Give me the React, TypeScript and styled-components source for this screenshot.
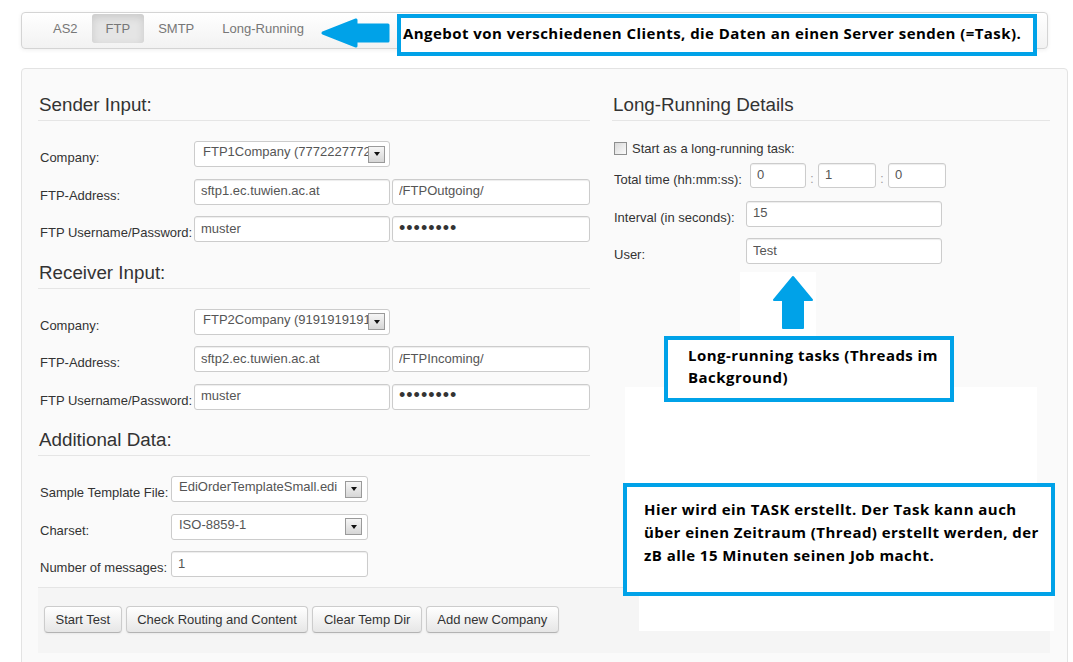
import React from 'react';
import styled, { createGlobalStyle } from 'styled-components';

const Global = createGlobalStyle`
  html, body { margin: 0; padding: 0; background: #fff; overflow: hidden; }
  body { font-family: "Liberation Sans", Arial, sans-serif; font-size: 13px; color: #333; }
  * { box-sizing: border-box; }
`;

const Page = styled.div`
  position: relative;
  width: 1073px;
  height: 662px;
  padding: 12px 0 0 21px;
`;

const NavBar = styled.div`
  width: 1027px;
  height: 37px;
  background: linear-gradient(#ffffff, #f2f2f2);
  border: 1px solid #d4d4d4;
  border-radius: 4px;
  box-shadow: 0 1px 4px rgba(0, 0, 0, 0.065);
  display: flex;
  align-items: flex-start;
  padding: 1px 0 0 17px;
`;

const Tab = styled.div<{ $active?: boolean }>`
  height: 29px;
  line-height: 29px;
  padding: 0 14px;
  color: #777;
  font-size: 13px;
  border-radius: 3px;
  background: ${(p) => (p.$active ? '#e5e5e5' : 'transparent')};
  box-shadow: ${(p) => (p.$active ? 'inset 0 3px 8px rgba(0,0,0,0.125)' : 'none')};
`;

const Panel = styled.div`
  margin-top: 19px;
  width: 1047px;
  height: 620px;
  background: #fafafa;
  border: 1px solid #e3e3e3;
  border-radius: 4px;
  padding: 0 17px 0 16px;
`;

const Columns = styled.div`
  display: grid;
  grid-template-columns: 552px 438px;
  column-gap: 22px;
`;

const Column = styled.div`
  padding-top: 21px;
  display: flex;
  flex-direction: column;
`;

const Legend = styled.div`
  height: 31px;
  line-height: 30px;
  font-size: 18.8px;
  color: #333;
  border-bottom: 1px solid #e5e5e5;
  margin-bottom: 20px;
  padding-left: 1px;
`;

const Fields = styled.div`
  display: flex;
  flex-direction: column;
  gap: 11.5px;
  margin-bottom: 15.5px;
  &:last-child {
    margin-bottom: 0;
  }
`;

const Row = styled.div<{ $label: number }>`
  display: grid;
  grid-template-columns: ${(p) => p.$label}px auto;
  align-items: start;
`;

const Label = styled.label`
  line-height: 18px;
  padding-top: 8px;
  padding-left: 2px;
  white-space: nowrap;
  color: #333;
`;

const Controls = styled.div`
  display: flex;
  gap: 2px;
  align-items: center;
`;

const Input = styled.input<{ $w: number; $h?: number; $dots?: boolean }>`
  width: ${(p) => p.$w}px;
  height: ${(p) => p.$h ?? 26}px;
  padding: 0 6px 2px;
  border: 1px solid #ccc;
  border-radius: 3px;
  background: #fff;
  color: ${(p) => (p.$dots ? '#333' : '#555')};
  font-family: "Liberation Sans", Arial, sans-serif;
  font-size: ${(p) => (p.$dots ? '18px' : '13px')};
  letter-spacing: ${(p) => (p.$dots ? '1px' : '0')};
  box-shadow: inset 0 1px 1px rgba(0, 0, 0, 0.075);
  outline: none;
`;

const Select = styled.div<{ $w: number; $pad: number; $btnGap: number }>`
  width: ${(p) => p.$w}px;
  height: 26px;
  border: 1px solid #ccc;
  border-radius: 3px;
  background: #fff;
  display: flex;
  align-items: center;
  padding: 0 ${(p) => p.$btnGap}px 0 ${(p) => p.$pad}px;
  color: #555;
`;

const SelectText = styled.span`
  flex: 1;
  min-width: 0;
  overflow: hidden;
  white-space: nowrap;
  padding-bottom: 5px;
`;

const DropBtn = styled.span`
  flex: none;
  width: 17px;
  height: 17px;
  border: 1px solid #9a9a9a;
  background: linear-gradient(#f6f6f6, #d6d6d6);
  display: flex;
  align-items: center;
  justify-content: center;
  &::after {
    content: '';
    border-left: 3.5px solid transparent;
    border-right: 3.5px solid transparent;
    border-top: 4px solid #111;
  }
`;

const CheckRow = styled.div`
  display: flex;
  align-items: center;
  gap: 5px;
  height: 17px;
  margin-top: -1px;
  margin-bottom: 6px;
  padding-left: 2px;
`;

const CheckBox = styled.span`
  width: 13px;
  height: 13px;
  border: 1px solid #8e8f8f;
  background: linear-gradient(135deg, #d9d9d9, #fbfbfb);
`;

const RightFields = styled.div`
  display: flex;
  flex-direction: column;
  gap: 11.5px;
`;

const Sep = styled.span`
  width: 12px;
  text-align: center;
  color: #999;
  font-size: 12px;
  padding-top: 6px;
`;

const TimeControls = styled.div`
  display: flex;
  align-items: center;
`;

const FormActions = styled.div`
  margin-top: 10px;
  border-top: 1px solid #e5e5e5;
  background: #f5f5f5;
  padding: 18px 6px 20px;
  display: flex;
  gap: 4px;
`;

const Button = styled.button`
  height: 27px;
  padding: 0 10.5px 1px;
  font-family: "Liberation Sans", Arial, sans-serif;
  font-size: 13px;
  color: #333;
  background: linear-gradient(#ffffff, #e6e6e6);
  border: 1px solid #cccccc;
  border-bottom-color: #b3b3b3;
  border-radius: 4px;
  box-shadow: inset 0 1px 0 rgba(255, 255, 255, 0.2), 0 1px 2px rgba(0, 0, 0, 0.05);
`;

/* ---------- annotations (overlay) ---------- */

const Patch = styled.div<{ $x: number; $y: number; $w: number; $h: number }>`
  position: absolute;
  left: ${(p) => p.$x}px;
  top: ${(p) => p.$y}px;
  width: ${(p) => p.$w}px;
  height: ${(p) => p.$h}px;
  background: #fff;
`;

const Note = styled.div<{ $x: number; $y: number; $w: number; $h: number; $px: number; $pt: number; $lh: number }>`
  position: absolute;
  left: ${(p) => p.$x}px;
  top: ${(p) => p.$y}px;
  width: ${(p) => p.$w}px;
  height: ${(p) => p.$h}px;
  border: 4px solid #00a2e8;
  background: #fff;
  padding: ${(p) => p.$pt}px 0 0 ${(p) => p.$px}px;
  font-family: "Open Sans", Lato, sans-serif;
  font-weight: 700;
  font-size: 15px;
  letter-spacing: 0.45px;
  line-height: ${(p) => p.$lh}px;
  white-space: nowrap;
  color: #000;
`;

const ArrowSvg = styled.svg<{ $x: number; $y: number }>`
  position: absolute;
  left: ${(p) => p.$x}px;
  top: ${(p) => p.$y}px;
`;

export default function App() {
  return (
    <>
      <Global />
      <Page>
        <NavBar>
          <Tab>AS2</Tab>
          <Tab $active>FTP</Tab>
          <Tab>SMTP</Tab>
          <Tab>Long-Running</Tab>
        </NavBar>

        <Panel>
          <Columns>
            <Column>
              <Legend>Sender Input:</Legend>
              <Fields>
                <Row $label={156}>
                  <Label>Company:</Label>
                  <Select $w={196} $pad={8} $btnGap={4}>
                    <SelectText>FTP1Company (7772227772)</SelectText>
                    <DropBtn />
                  </Select>
                </Row>
                <Row $label={156}>
                  <Label>FTP-Address:</Label>
                  <Controls>
                    <Input $w={196} readOnly value="sftp1.ec.tuwien.ac.at" />
                    <Input $w={198} readOnly value="/FTPOutgoing/" />
                  </Controls>
                </Row>
                <Row $label={156}>
                  <Label>FTP Username/Password:</Label>
                  <Controls>
                    <Input $w={196} readOnly value="muster" />
                    <Input $w={198} $dots readOnly value="••••••••" />
                  </Controls>
                </Row>
              </Fields>

              <Legend>Receiver Input:</Legend>
              <Fields>
                <Row $label={156}>
                  <Label>Company:</Label>
                  <Select $w={196} $pad={8} $btnGap={4}>
                    <SelectText>FTP2Company (9191919191)</SelectText>
                    <DropBtn />
                  </Select>
                </Row>
                <Row $label={156}>
                  <Label>FTP-Address:</Label>
                  <Controls>
                    <Input $w={196} readOnly value="sftp2.ec.tuwien.ac.at" />
                    <Input $w={198} readOnly value="/FTPIncoming/" />
                  </Controls>
                </Row>
                <Row $label={156}>
                  <Label>FTP Username/Password:</Label>
                  <Controls>
                    <Input $w={196} readOnly value="muster" />
                    <Input $w={198} $dots readOnly value="••••••••" />
                  </Controls>
                </Row>
              </Fields>

              <Legend>Additional Data:</Legend>
              <Fields>
                <Row $label={133}>
                  <Label>Sample Template File:</Label>
                  <Select $w={197} $pad={7} $btnGap={5}>
                    <SelectText>EdiOrderTemplateSmall.edi</SelectText>
                    <DropBtn />
                  </Select>
                </Row>
                <Row $label={133}>
                  <Label>Charset:</Label>
                  <Select $w={197} $pad={7} $btnGap={5}>
                    <SelectText>ISO-8859-1</SelectText>
                    <DropBtn />
                  </Select>
                </Row>
                <Row $label={133}>
                  <Label>Number of messages:</Label>
                  <Input $w={197} readOnly value="1" />
                </Row>
              </Fields>
            </Column>

            <Column>
              <Legend>Long-Running Details</Legend>
              <CheckRow>
                <CheckBox />
                <span>Start as a long-running task:</span>
              </CheckRow>
              <RightFields>
                <Row $label={138}>
                  <Label>Total time (hh:mm:ss):</Label>
                  <TimeControls>
                    <Input $w={56} $h={25} readOnly value="0" />
                    <Sep>:</Sep>
                    <Input $w={58} $h={25} readOnly value="1" />
                    <Sep>:</Sep>
                    <Input $w={58} $h={25} readOnly value="0" />
                  </TimeControls>
                </Row>
                <Row $label={134}>
                  <Label>Interval (in seconds):</Label>
                  <Input $w={196} readOnly value="15" />
                </Row>
                <Row $label={134}>
                  <Label>User:</Label>
                  <Input $w={196} readOnly value="Test" />
                </Row>
              </RightFields>
            </Column>
          </Columns>

          <FormActions>
            <Button>Start Test</Button>
            <Button>Check Routing and Content</Button>
            <Button>Clear Temp Dir</Button>
            <Button>Add new Company</Button>
          </FormActions>
        </Panel>

        {/* annotation overlays */}
        <ArrowSvg $x={318} $y={16} width={74} height={34} viewBox="0 0 74 34">
          <polygon
            points="5,17 38,4 38,9 70,9 70,25 38,25 38,30"
            fill="#00a2e8"
            stroke="#00a2e8"
            strokeWidth={3}
            strokeLinejoin="round"
          />
        </ArrowSvg>
        <Note $x={397} $y={14} $w={640} $h={42} $px={2} $pt={4} $lh={22}>
          Angebot von verschiedenen Clients, die Daten an einen Server senden (=Task).
        </Note>

        <Patch $x={740} $y={272} $w={76} $h={66} />
        <Patch $x={625} $y={387} $w={412} $h={100} />
        <Patch $x={639} $y={594} $w={415} $h={37} />
        <ArrowSvg $x={772} $y={274} width={44} height={56} viewBox="0 0 44 56">
          <polygon
            points="21,3 40,26 31,26 31,54 11,54 11,26 2,26"
            fill="#00a2e8"
            stroke="#00a2e8"
            strokeWidth={2}
            strokeLinejoin="round"
          />
        </ArrowSvg>
        <Note $x={664} $y={336} $w={290} $h={66} $px={20} $pt={4} $lh={22}>
          Long-running tasks (Threads im
          <br />
          Background)
        </Note>
        <Note $x={623} $y={483} $w={432} $h={113} $px={17} $pt={11} $lh={23}>
          Hier wird ein TASK erstellt. Der Task kann auch
          <br />
          über einen Zeitraum (Thread) erstellt werden, der
          <br />
          zB alle 15 Minuten seinen Job macht.
        </Note>
      </Page>
    </>
  );
}
